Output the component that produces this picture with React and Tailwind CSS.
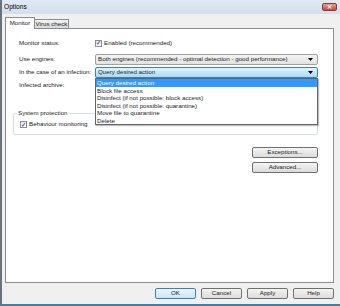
import React from 'react';

const ENGINES = 'Both engines (recommended - optimal detection - good performance)';
const ACTIONS = [
  'Query desired action',
  'Block file access',
  'Disinfect (if not possible: block access)',
  'Disinfect (if not possible: quarantine)',
  'Move file to quarantine',
  'Delete',
];

function Check({ label }) {
  return (
    <div className="flex items-center gap-[2px]">
      <span className="w-[7px] h-[7px] border border-[#8e8f8f] bg-gradient-to-b from-[#e6e6e6] to-[#fbfbfb] flex items-center justify-center text-[#3d5a98] text-[6px] leading-none font-bold">
        ✓
      </span>
      <span>{label}</span>
    </div>
  );
}

function Arrow() {
  return (
    <svg width="5" height="3" viewBox="0 0 5 3" className="shrink-0">
      <path d="M0 0h5L2.5 3z" fill="#000" />
    </svg>
  );
}

function Combo({ value, focused }) {
  return (
    <div
      className={`w-[223px] h-[11px] rounded-[2px] border flex items-center justify-between pl-[2px] pr-[4px] ${
        focused
          ? 'border-[#3c7fb1] bg-gradient-to-b from-[#e3f3fc] to-[#a9d9f4]'
          : 'border-[#a0a0a0] bg-gradient-to-b from-[#f4f4f4] to-[#e2e2e2]'
      }`}
    >
      <span className="whitespace-nowrap">{value}</span>
      <Arrow />
    </div>
  );
}

function Button({ children, width = 'w-[41px]', focused }) {
  return (
    <div
      className={`${width} h-[11px] rounded-[2px] border flex items-center justify-center ${
        focused
          ? 'border-[#3c7fb1] bg-gradient-to-b from-[#eaf6fd] to-[#c9e7f8]'
          : 'border-[#707070] bg-gradient-to-b from-[#f4f4f4] to-[#dcdcdc]'
      }`}
    >
      {children}
    </div>
  );
}

export default function App() {
  return (
    <div className="w-[340px] h-[306px] overflow-hidden flex flex-col bg-[#f0f0f0] border-l-2 border-l-[#6b7279] border-b-2 border-b-[#2f88aa] font-['Liberation_Sans',Arial,sans-serif] text-[6.2px] text-[#1a1a1a] leading-none">
      {/* Title bar */}
      <div className="h-[14px] shrink-0 flex items-center justify-between pl-[2px] pr-[3px] bg-gradient-to-b from-[#e2eaf3] to-[#d3dfeb] text-[6.6px] text-black">
        <span>Options</span>
        <div className="w-[15px] h-[8px] rounded-[2px] border border-[#8b3a32] bg-gradient-to-b from-[#e6a195] to-[#c4473a] flex items-center justify-center text-white text-[6px] font-bold">
          ✕
        </div>
      </div>

      {/* Tabs */}
      <div className="h-[11px] mt-[3px] ml-[3px] shrink-0 flex items-end">
        <div className="relative z-10 w-[30px] h-[12px] mb-[-1px] bg-white border border-b-0 border-[#898c95] flex items-center justify-center">
          Monitor
        </div>
        <div className="w-[34px] h-[9px] bg-gradient-to-b from-[#f3f3f3] to-[#dadada] border border-l-0 border-b-0 border-[#898c95] flex items-center justify-center">
          Virus check
        </div>
      </div>

      {/* Panel */}
      <div className="relative ml-[3px] w-[329px] h-[255px] shrink-0 bg-white border border-[#898c95] flex flex-col">
        <div className="mt-[10px] h-[8px] flex items-center">
          <span className="ml-[13px] w-[76px]">Monitor status:</span>
          <Check label="Enabled (recommended)" />
        </div>
        <div className="mt-[7px] flex items-center">
          <span className="ml-[13px] w-[76px]">Use engines:</span>
          <Combo value={ENGINES} />
        </div>
        <div className="mt-[2px] flex items-center">
          <span className="ml-[13px] w-[76px] whitespace-nowrap">In the case of an infection:</span>
          <Combo value="Query desired action" focused />
        </div>
        <div className="mt-[2px] flex items-center">
          <span className="ml-[13px] w-[76px]">Infected archive:</span>
          {/* hidden under the open list */}
          <Combo value="" />
        </div>

        <fieldset className="mt-[18px] ml-[7px] w-[305px] h-[26px] border border-[#d5dfe5] rounded-[2px] px-[3px]">
          <legend className="px-[1px] leading-[8px]">System protection</legend>
          <div className="mt-[4px] ml-[3px]">
            <Check label="Behaviour monitoring" />
          </div>
        </fieldset>

        <div className="mt-[12px] mr-[15px] self-end flex flex-col gap-[4px]">
          <Button width="w-[66px]">Exceptions...</Button>
          <Button width="w-[66px]">Advanced...</Button>
        </div>

        {/* Open dropdown list */}
        <div className="absolute left-[89px] top-[49px] z-20 w-[223px] h-[47px] bg-white border border-[#646464] shadow-[1px_1px_1px_rgba(0,0,0,0.25)]">
          {ACTIONS.map((a, i) => (
            <div
              key={a}
              className={`h-[7.5px] leading-[7.5px] pl-[1px] whitespace-nowrap overflow-hidden ${
                i === 0 ? 'bg-[#3399ff] text-white' : ''
              }`}
            >
              {a}
            </div>
          ))}
        </div>
      </div>

      {/* Dialog buttons */}
      <div className="mt-[5px] mr-[6px] flex justify-end gap-[5px]">
        <Button focused>OK</Button>
        <Button>Cancel</Button>
        <Button>Apply</Button>
        <Button>Help</Button>
      </div>
    </div>
  );
}
